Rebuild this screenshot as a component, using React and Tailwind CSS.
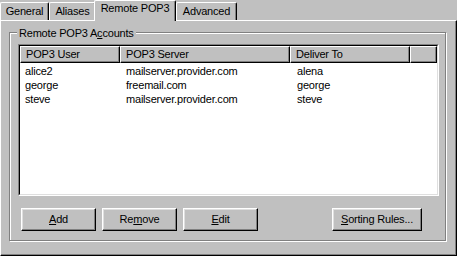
import React from 'react';

const accounts = [
    { user: 'alice2', server: 'mailserver.provider.com', deliverTo: 'alena' },
    { user: 'george', server: 'freemail.com', deliverTo: 'george' },
    { user: 'steve', server: 'mailserver.provider.com', deliverTo: 'steve' },
];

// win98 raised edge used on tabs, buttons and header cells
const raised = 'border-t border-l border-white border-r border-b border-r-black border-b-black';

const Tab = ({ label, width, selected }) => {
    if (selected) {
        return (
            <div className={`${width} -ml-[2px] -mb-px relative z-10 h-[21px] bg-[#c0c0c0] border-t border-l border-white border-r border-r-black rounded-t-[2px] shadow-[inset_-1px_0_0_#808080] pt-px text-center leading-[13px]`}>
                {label}
            </div>
        );
    }
    return (
        <div className={`${width} h-[18px] bg-[#c0c0c0] border-t border-l border-white border-r border-r-black rounded-t-[2px] shadow-[inset_-1px_0_0_#808080] pt-[2px] text-center leading-[13px]`}>
            {label}
        </div>
    );
};

const Button = ({ children, width }) => (
    <button
        type="button"
        className={`${width} h-[23px] bg-[#c0c0c0] ${raised} shadow-[inset_-1px_-1px_0_#808080,inset_1px_1px_0_#dfdfdf] flex items-center justify-center leading-[13px]`}
    >
        {children}
    </button>
);

const HeaderCell = ({ children, width }) => (
    <div className={`${width} h-[17px] ${raised} shadow-[inset_-1px_-1px_0_#808080] pl-[5px] flex items-center leading-[15px] whitespace-nowrap`}>
        {children}
    </div>
);

const App = () => {
    return (
        <div className="w-[457px] h-[256px] bg-[#c0c0c0] flex flex-col overflow-hidden font-['Liberation_Sans',Arial,sans-serif] text-[11px] tracking-[-0.2px] text-black select-none">
            {/* Tab strip */}
            <div className="h-[20px] flex items-end relative z-10">
                <Tab label="General" width="w-[49px]" />
                <Tab label="Aliases" width="w-[47px]" />
                <Tab label="Remote POP3" width="w-[82px]" selected />
                <Tab label="Advanced" width="w-[61px]" />
            </div>

            {/* Tab page */}
            <div className="h-[236px] border-t border-l border-white border-r border-b border-r-black border-b-black shadow-[inset_-1px_-1px_0_#808080] pl-[8px] pt-[11px]">
                {/* Group box */}
                <div className="relative w-[437px] h-[209px] border border-[#808080] shadow-[1px_1px_0_#ffffff,inset_1px_1px_0_#ffffff] pl-[8px] pt-[11px]">
                    <div className="absolute left-[7px] -top-[6px] bg-[#c0c0c0] px-[2px] leading-[13px]">
                        Remote POP3 A<u>c</u>counts
                    </div>

                    {/* List view */}
                    <div className="w-[421px] h-[152px] bg-white border-t border-l border-[#808080] border-r border-b border-r-white border-b-white">
                        <div className="h-full border-t border-l border-black border-r border-b border-r-[#dfdfdf] border-b-[#dfdfdf] flex flex-col">
                            <div className="flex bg-[#c0c0c0]">
                                <HeaderCell width="w-[100px]">POP3 User</HeaderCell>
                                <HeaderCell width="w-[170px]">POP3 Server</HeaderCell>
                                <HeaderCell width="w-[120px]">Deliver To</HeaderCell>
                                <HeaderCell width="flex-1"></HeaderCell>
                            </div>
                            <div className="pt-px">
                                {accounts.map((a) => (
                                    <div key={a.user} className="flex h-[14px] leading-[14px] whitespace-nowrap">
                                        <div className="w-[100px] pl-[5px]">{a.user}</div>
                                        <div className="w-[170px] pl-[6px]">{a.server}</div>
                                        <div className="w-[120px] pl-[7px]">{a.deliverTo}</div>
                                    </div>
                                ))}
                            </div>
                        </div>
                    </div>

                    {/* Buttons */}
                    <div className="flex mt-[12px] ml-[3px]">
                        <div className="flex gap-[6px]">
                            <Button width="w-[75px]"><u>A</u>dd</Button>
                            <Button width="w-[75px]">Re<u>m</u>ove</Button>
                            <Button width="w-[75px]"><u>E</u>dit</Button>
                        </div>
                        <div className="ml-[74px]">
                            <Button width="w-[90px]"><u>S</u>orting Rules...</Button>
                        </div>
                    </div>
                </div>
            </div>
        </div>
    );
};

export default App;
